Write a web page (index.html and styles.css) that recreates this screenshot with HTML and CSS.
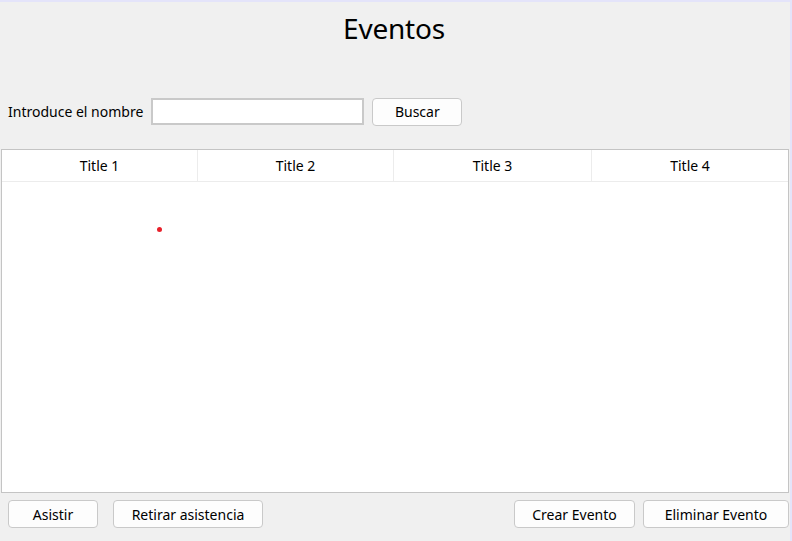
FILE: index.html
```html
<!DOCTYPE html>
<html lang="es">
<head>
<meta charset="utf-8">
<title>Eventos</title>
<link rel="stylesheet" href="styles.css">
</head>
<body>
<div class="app">
  <h1 class="title">Eventos</h1>
  <div class="search">
    <label class="label" for="nombre">Introduce el nombre</label>
    <input class="field" id="nombre" type="text">
    <button class="btn btn-buscar">Buscar</button>
  </div>
  <div class="table">
    <div class="thead">
      <div class="th">Title 1</div>
      <div class="th">Title 2</div>
      <div class="th">Title 3</div>
      <div class="th">Title 4</div>
    </div>
    <div class="tbody">
      <span class="dot"></span>
    </div>
  </div>
  <div class="footer">
    <button class="btn btn-asistir">Asistir</button>
    <button class="btn btn-retirar">Retirar asistencia</button>
    <span class="spacer"></span>
    <button class="btn btn-crear">Crear Evento</button>
    <button class="btn btn-eliminar">Eliminar Evento</button>
  </div>
</div>
</body>
</html>
```

FILE: styles.css
```css
html, body {
  margin: 0;
  padding: 0;
  background: #f0f0f0;
}
body {
  font-family: "Noto Sans", "Open Sans", sans-serif;
  color: #000;
}
.app {
  box-sizing: border-box;
  width: 792px;
  height: 541px;
  border-top: 2px solid #e4e4fa;
  border-right: 2px solid #e4e4fa;
  display: flex;
  flex-direction: column;
}
.title {
  margin: 0;
  padding-top: 7px;
  height: 39px;
  font-size: 28px;
  font-weight: 400;
  line-height: 39px;
  text-align: center;
  letter-spacing: -0.2px;
  padding-right: 2px;
}
.search {
  display: flex;
  align-items: center;
  margin-top: 50px;
  padding-left: 8px;
  height: 27px;
}
.label {
  font-size: 14px;
  margin-right: 8px;
  letter-spacing: 0;
}
.field {
  box-sizing: border-box;
  width: 213px;
  height: 27px;
  margin: 0 8px 0 0;
  border: 2px solid #c9c9c9;
  border-radius: 0;
  background: #fff;
  padding: 0 4px;
}
.btn {
  box-sizing: border-box;
  height: 28px;
  border: 1px solid #c9c9c9;
  border-radius: 4px;
  background: #fdfdfd;
  font-family: inherit;
  font-size: 14px;
  color: #000;
  padding: 0;
  margin: 0;
}
.btn-buscar { width: 90px; }
.table {
  position: relative;
  box-sizing: border-box;
  margin: 24px 1px 0 1px;
  height: 344px;
  border: 1px solid #c4c4c4;
  background: #fff;
  display: flex;
  flex-direction: column;
}
.thead {
  display: grid;
  grid-template-columns: 196px 196px 198px 1fr;
  height: 31px;
  border-bottom: 1px solid #ececec;
}
.th {
  display: flex;
  align-items: center;
  justify-content: center;
  font-size: 14px;
  border-right: 1px solid #ececec;
}
.th:last-child { border-right: none; }
.tbody {
  flex: 1;
  position: relative;
}
.dot {
  position: absolute;
  left: 155px;
  top: 45px;
  width: 5px;
  height: 5px;
  border-radius: 50%;
  background: #e8202a;
}
.footer {
  display: flex;
  align-items: center;
  padding: 7px 1px 0 8px;
  gap: 8px;
}
.spacer { flex: 1; }
.btn-asistir { width: 90px; }
.btn-retirar { width: 150px; margin-left: 7px; }
.btn-crear { width: 121px; }
.btn-eliminar { width: 146px; }
```
